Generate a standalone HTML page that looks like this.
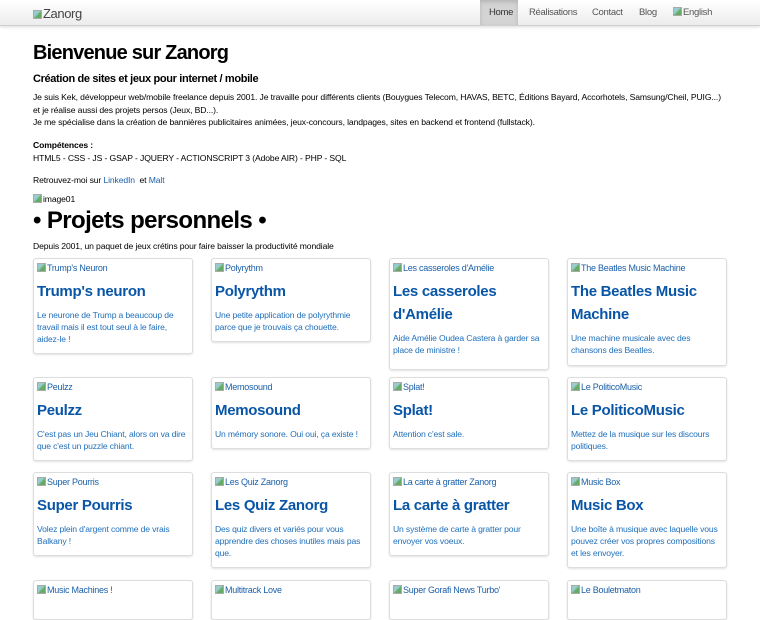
<!DOCTYPE html>
<html><head><meta charset="utf-8"><style>
*{margin:0;padding:0;box-sizing:border-box}
body{width:760px;height:600px;overflow:hidden;background:#fff;font-family:"Liberation Sans",Arial,sans-serif;color:#000;position:relative}
.nav{position:absolute;left:0;top:0;width:760px;height:26px;background:linear-gradient(#fff,#ececec);border-bottom:1px solid #d0d0d0;box-shadow:0 1px 3px rgba(0,0,0,.15)}
.logo{position:absolute;left:33px;top:6px;font-size:13px;color:#444;letter-spacing:-0.4px}
.nav a{position:absolute;top:7px;font-size:9.5px;color:#555;text-decoration:none;letter-spacing:-0.3px}
.home{position:absolute;left:480px;top:0;width:38px;height:25px;background:#d4d4d4;box-shadow:inset 0 2px 4px rgba(0,0,0,.15)}
.t{position:absolute;left:33px;white-space:nowrap;letter-spacing:-0.12px}
.card{position:absolute;width:160px;border:1px solid #ddd;border-radius:3px;box-shadow:0 1px 2px rgba(0,0,0,.12);background:#fff;padding:0 3px;letter-spacing:-0.15px}
.card .im{font-size:9px;color:#1a5fa8;margin-top:3px;height:12px;line-height:12px;letter-spacing:-0.25px}
.card h3{font-size:15px;color:#0a56a6;line-height:23px;margin-top:6px;font-weight:bold;letter-spacing:-0.3px}
.card p{font-size:8.6px;color:#1f6fbb;line-height:12px;margin-top:6px}
.ib{display:inline-block;width:9px;height:9px;border:1px solid #aaa;background:linear-gradient(135deg,#9cc 40%,#6a6 60%);vertical-align:-1px;margin-right:1px}
</style></head><body>
<div class="nav">
<div class="logo"><span class="ib"></span>Zanorg</div>
<div class="home"></div>
<a style="left:489px;color:#333">Home</a>
<a style="left:529px">Réalisations</a>
<a style="left:592px">Contact</a>
<a style="left:639px">Blog</a>
<a style="left:673px"><span class="ib"></span>English</a>
</div>
<div class="t" style="top:42px;font-size:20px;font-weight:bold;letter-spacing:-0.8px">Bienvenue sur Zanorg</div>
<div class="t" style="top:73px;font-size:11px;font-weight:bold;letter-spacing:-0.35px">Création de sites et jeux pour internet / mobile</div>
<div class="t" style="top:91px;font-size:8.6px;line-height:12.5px">Je suis Kek, développeur web/mobile freelance depuis 2001. Je travaille pour différents clients (Bouygues Telecom, HAVAS, BETC, Éditions Bayard, Accorhotels, Samsung/Cheil, PUIG...)<br>et je réalise aussi des projets persos (Jeux, BD...).<br>Je me spécialise dans la création de bannières publicitaires animées, jeux-concours, landpages, sites en backend et frontend (fullstack).</div>
<div class="t" style="top:139px;font-size:8.6px;line-height:12.5px"><b>Compétences :</b><br>HTML5 - CSS - JS - GSAP - JQUERY - ACTIONSCRIPT 3 (Adobe AIR) - PHP - SQL</div>
<div class="t" style="top:175px;font-size:8.6px">Retrouvez-moi sur <span style="color:#1a5fa8">LinkedIn</span> &nbsp;et <span style="color:#1a5fa8">Malt</span></div>
<div class="t" style="top:194px;font-size:8.6px"><span class="ib"></span>image01</div>
<div class="t" style="top:207px;font-size:24px;font-weight:bold;letter-spacing:-0.6px">• Projets personnels •</div>
<div class="t" style="top:241px;font-size:8.6px">Depuis 2001, un paquet de jeux crétins pour faire baisser la productivité mondiale</div>

<div class="card" style="left:33px;top:258px;height:96px"><div class="im"><span class="ib"></span>Trump's Neuron</div><h3>Trump's neuron</h3><p>Le neurone de Trump a beaucoup de travail mais il est tout seul à le faire,<br>aidez-le !</p></div>
<div class="card" style="left:211px;top:258px;height:84px"><div class="im"><span class="ib"></span>Polyrythm</div><h3>Polyrythm</h3><p>Une petite application de polyrythmie parce que je trouvais ça chouette.</p></div>
<div class="card" style="left:389px;top:258px;height:112px"><div class="im"><span class="ib"></span>Les casseroles d'Amélie</div><h3>Les casseroles d'Amélie</h3><p>Aide Amélie Oudea Castera à garder sa place de ministre !</p></div>
<div class="card" style="left:567px;top:258px;height:108px"><div class="im"><span class="ib"></span>The Beatles Music Machine</div><h3>The Beatles Music Machine</h3><p>Une machine musicale avec des chansons des Beatles.</p></div>

<div class="card" style="left:33px;top:377px;height:84px"><div class="im"><span class="ib"></span>Peulzz</div><h3>Peulzz</h3><p>C'est pas un Jeu Chiant, alors on va dire que c'est un puzzle chiant.</p></div>
<div class="card" style="left:211px;top:377px;height:72px"><div class="im"><span class="ib"></span>Memosound</div><h3>Memosound</h3><p>Un mémory sonore. Oui oui, ça existe !</p></div>
<div class="card" style="left:389px;top:377px;height:72px"><div class="im"><span class="ib"></span>Splat!</div><h3>Splat!</h3><p>Attention c'est sale.</p></div>
<div class="card" style="left:567px;top:377px;height:84px"><div class="im"><span class="ib"></span>Le PoliticoMusic</div><h3>Le PoliticoMusic</h3><p>Mettez de la musique sur les discours politiques.</p></div>

<div class="card" style="left:33px;top:472px;height:84px"><div class="im"><span class="ib"></span>Super Pourris</div><h3>Super Pourris</h3><p>Volez plein d'argent comme de vrais Balkany !</p></div>
<div class="card" style="left:211px;top:472px;height:96px"><div class="im"><span class="ib"></span>Les Quiz Zanorg</div><h3>Les Quiz Zanorg</h3><p>Des quiz divers et variés pour vous apprendre des choses inutiles mais pas que.</p></div>
<div class="card" style="left:389px;top:472px;height:84px"><div class="im"><span class="ib"></span>La carte à gratter Zanorg</div><h3>La carte à gratter</h3><p>Un système de carte à gratter pour envoyer vos voeux.</p></div>
<div class="card" style="left:567px;top:472px;height:96px"><div class="im"><span class="ib"></span>Music Box</div><h3>Music Box</h3><p>Une boîte à musique avec laquelle vous pouvez créer vos propres compositions et les envoyer.</p></div>

<div class="card" style="left:33px;top:580px;height:40px"><div class="im"><span class="ib"></span>Music Machines !</div></div>
<div class="card" style="left:211px;top:580px;height:40px"><div class="im"><span class="ib"></span>Multitrack Love</div></div>
<div class="card" style="left:389px;top:580px;height:40px"><div class="im"><span class="ib"></span>Super Gorafi News Turbo'</div></div>
<div class="card" style="left:567px;top:580px;height:40px"><div class="im"><span class="ib"></span>Le Bouletmaton</div></div>
</body></html>
